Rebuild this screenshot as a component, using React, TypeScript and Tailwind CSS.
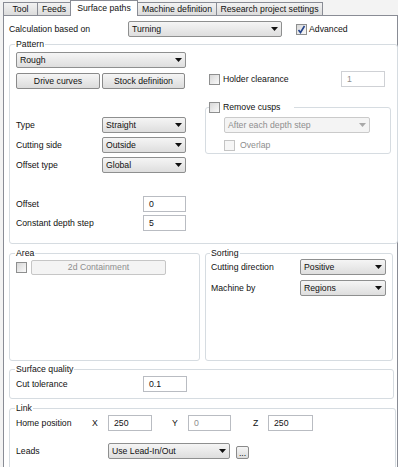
import React from 'react';

function Arrow({ disabled }: { disabled?: boolean }) {
  return (
    <svg width="7" height="4" viewBox="0 0 7 4" className="shrink-0">
      <polygon points="0,0 7,0 3.5,4" fill={disabled ? '#a8a8a8' : '#111'} />
    </svg>
  );
}

function Select({ value, className = '', disabled }: { value: string; className?: string; disabled?: boolean }) {
  return (
    <div
      className={`flex h-[16px] shrink-0 items-center justify-between rounded-[2px] border pl-[3px] pr-[3px] ${
        disabled
          ? 'border-[#cacaca] bg-[#f4f4f4] text-[#8e8e8e]'
          : 'border-[#8e8f8f] bg-linear-to-b from-[#f5f5f5] to-[#dedede]'
      } ${className}`}
    >
      <span>{value}</span>
      <Arrow disabled={disabled} />
    </div>
  );
}

function Button({ label, className = '', disabled }: { label: string; className?: string; disabled?: boolean }) {
  return (
    <div
      className={`flex shrink-0 items-center justify-center rounded-[2px] border ${
        disabled
          ? 'border-[#c6c6c6] bg-[#f4f4f4] text-[#8e8e8e]'
          : 'border-[#8a8a8a] bg-linear-to-b from-[#f5f5f5] to-[#dcdcdc]'
      } ${className}`}
    >
      {label}
    </div>
  );
}

function TextBox({ value, className = '', muted }: { value: string; className?: string; muted?: boolean }) {
  return (
    <div
      className={`flex h-[16px] shrink-0 items-center border border-[#b9bcc2] bg-white pl-[5px] ${
        muted ? 'text-[#8e8e8e]' : ''
      } ${className}`}
    >
      {value}
    </div>
  );
}

function Checkbox({ checked, disabled }: { checked?: boolean; disabled?: boolean }) {
  return (
    <div
      className={`flex h-[11px] w-[11px] shrink-0 items-center justify-center border ${
        disabled
          ? 'border-[#c4c4c4] bg-[#f6f6f6]'
          : 'border-[#8e8f8f] bg-linear-to-br from-[#d8d8d8] to-[#fafafa]'
      }`}
    >
      {checked && (
        <svg width="9" height="9" viewBox="0 0 9 9">
          <path d="M1.5 5 L3.5 7.5 L7.5 1" fill="none" stroke="#24448c" strokeWidth="1.6" />
        </svg>
      )}
    </div>
  );
}

function Tab({ label, active, className = '' }: { label: string; active?: boolean; className?: string }) {
  return (
    <div
      className={`flex shrink-0 items-center justify-center border border-b-0 border-[#898c95] ${
        active
          ? 'relative z-10 -mb-px h-[16px] bg-white'
          : 'h-[13px] bg-linear-to-b from-[#f2f2f2] to-[#dcdcdc]'
      } ${className}`}
    >
      {label}
    </div>
  );
}

export default function App() {
  return (
    <div className="h-[467px] w-[398px] overflow-hidden bg-[#f3f3f3] font-['Liberation_Sans',Arial,sans-serif] text-[8.7px] leading-[11px] text-[#111]">
      {/* Tabs */}
      <div className="flex h-[15px] items-end pl-[3px]">
        <Tab label="Tool" className="w-[35px]" />
        <Tab label="Feeds" className="-ml-px w-[34px]" />
        <Tab label="Surface paths" active className="-ml-px w-[68px]" />
        <Tab label="Machine definition" className="-ml-px w-[80px]" />
        <Tab label="Research project settings" className="-ml-px w-[107px]" />
      </div>

      {/* Page */}
      <div className="ml-[3px] h-[470px] w-[395px] border border-[#898c95] bg-white pl-[5px] pt-[5px]">
        <div className="flex h-[16px] items-center">
          <span className="w-[119px] shrink-0">Calculation based on</span>
          <Select value="Turning" className="w-[154px]" />
          <div className="ml-[14px]">
            <Checkbox checked />
          </div>
          <span className="ml-[2px]">Advanced</span>
        </div>

        {/* Pattern */}
        <fieldset className="mt-[2px] w-[381px] rounded-[3px] border border-[#d6dce1] px-[6px] pb-[12px] pt-[2px]">
          <legend className="-ml-px px-px">Pattern</legend>
          <div className="flex">
            <div className="w-[170px] shrink-0">
              <Select value="Rough" className="w-[170px]" />
              <div className="mt-[5px] flex">
                <Button label="Drive curves" className="h-[16px] w-[84px]" />
                <Button label="Stock definition" className="ml-[2px] h-[16px] w-[83px]" />
              </div>
              <div className="mt-[28px] flex h-[16px] items-center">
                <span className="w-[86px] shrink-0">Type</span>
                <Select value="Straight" className="w-[84px]" />
              </div>
              <div className="mt-[4px] flex h-[16px] items-center">
                <span className="w-[86px] shrink-0">Cutting side</span>
                <Select value="Outside" className="w-[84px]" />
              </div>
              <div className="mt-[4px] flex h-[16px] items-center">
                <span className="w-[86px] shrink-0">Offset type</span>
                <Select value="Global" className="w-[84px]" />
              </div>
              <div className="mt-[23px] flex h-[16px] items-center">
                <span className="w-[127px] shrink-0">Offset</span>
                <TextBox value="0" className="w-[43px]" />
              </div>
              <div className="mt-[3px] flex h-[16px] items-center">
                <span className="w-[127px] shrink-0">Constant depth step</span>
                <TextBox value="5" className="w-[43px]" />
              </div>
            </div>

            <div className="ml-[19px] w-[186px] shrink-0">
              <div className="mt-[19px] flex h-[16px] items-center pl-[4px] pr-[6px]">
                <Checkbox />
                <span className="ml-[3px]">Holder clearance</span>
                <TextBox value="1" muted className="ml-auto w-[44px] border-[#cfd1d5]" />
              </div>
              <fieldset className="mt-[14px] rounded-[3px] border border-[#d6dce1] px-[3px] pb-[2px] pt-[4px]">
                <legend className="flex h-[12px] items-center pr-[14px]">
                  <Checkbox />
                  <span className="ml-[3px]">Remove cusps</span>
                </legend>
                <div className="pl-[15px]">
                  <Select value="After each depth step" disabled className="w-[146px]" />
                  <div className="mt-[7px] flex items-center">
                    <Checkbox disabled />
                    <span className="ml-[5px] text-[#8e8e8e]">Overlap</span>
                  </div>
                </div>
              </fieldset>
            </div>
          </div>
        </fieldset>

        {/* Area + Sorting */}
        <div className="mt-[4px] flex">
          <fieldset className="h-[113px] w-[191px] rounded-[3px] border border-[#d6dce1] px-[6px] pt-[1px]">
            <legend className="-ml-px px-px">Area</legend>
            <div className="flex h-[15px] items-center">
              <Checkbox />
              <Button label="2d Containment" disabled className="ml-[4px] h-[15px] w-[135px]" />
            </div>
          </fieldset>
          <fieldset className="ml-[5px] h-[113px] w-[188px] rounded-[3px] border border-[#d6dce1] px-[5px]">
            <legend className="-ml-px px-px">Sorting</legend>
            <div className="flex h-[16px] items-center">
              <span className="w-[89px] shrink-0">Cutting direction</span>
              <Select value="Positive" className="w-[86px]" />
            </div>
            <div className="mt-[5px] flex h-[16px] items-center">
              <span className="w-[89px] shrink-0">Machine by</span>
              <Select value="Regions" className="w-[86px]" />
            </div>
          </fieldset>
        </div>

        {/* Surface quality */}
        <fieldset className="mt-[3px] w-[385px] rounded-[3px] border border-[#d6dce1] px-[6px] pb-[6px] pt-[1px]">
          <legend className="-ml-px px-px">Surface quality</legend>
          <div className="flex h-[16px] items-center">
            <span className="w-[127px] shrink-0">Cut tolerance</span>
            <TextBox value="0.1" className="w-[44px]" />
          </div>
        </fieldset>

        {/* Link */}
        <fieldset className="mt-[4px] w-[387px] rounded-[3px] border border-[#d6dce1] px-[6px] pb-[20px] pt-[1px]">
          <legend className="-ml-px px-px">Link</legend>
          <div className="flex h-[16px] items-center">
            <span className="w-[76px] shrink-0">Home position</span>
            <span className="w-[16px] shrink-0">X</span>
            <TextBox value="250" className="w-[44px]" />
            <span className="ml-[20px] w-[16px] shrink-0">Y</span>
            <TextBox value="0" muted className="w-[43px]" />
            <span className="ml-[22px] w-[15px] shrink-0">Z</span>
            <TextBox value="250" className="w-[45px]" />
          </div>
          <div className="mt-[12px] flex h-[16px] items-center">
            <span className="w-[92px] shrink-0">Leads</span>
            <Select value="Use Lead-In/Out" className="w-[122px]" />
            <Button label="..." className="ml-[6px] mt-[3px] h-[13px] w-[13px] leading-[8px]" />
          </div>
        </fieldset>
      </div>
    </div>
  );
}
